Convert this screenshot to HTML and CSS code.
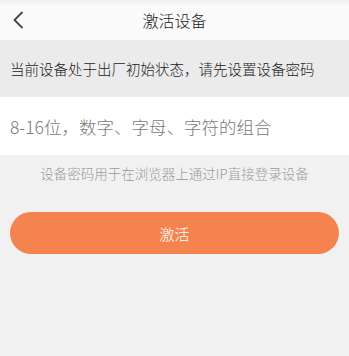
FILE: index.html
```html
<!DOCTYPE html>
<html lang="zh">
<head>
<meta charset="utf-8">
<title>激活设备</title>
<link rel="stylesheet" href="styles.css">
</head>
<body>
<div class="page">
  <header class="topbar">
    <span class="back">
      <svg width="12" height="18" viewBox="0 0 12 18"><path d="M10 1.5 L2.5 9 L10 16.5" fill="none" stroke="#444" stroke-width="1.8" stroke-linecap="round" stroke-linejoin="round"/></svg>
    </span>
    <h1 class="title">激活设备</h1>
  </header>
  <div class="notice">当前设备处于出厂初始状态，请先设置设备密码</div>
  <div class="field"><input class="pwd" type="password" placeholder="8-16位，数字、字母、字符的组合"></div>
  <p class="hint">设备密码用于在浏览器上通过IP直接登录设备</p>
  <button class="btn">激活</button>
</div>
</body>
</html>
```
FILE: styles.css
```css
* { box-sizing: border-box; }
html, body { margin: 0; padding: 0; }
body {
  background: #f1f1f1;
  font-family: "Noto Sans CJK SC", "Roboto", sans-serif;
  font-weight: 300;
  width: 349px;
  height: 356px;
  overflow: hidden;
}
.page { display: flex; flex-direction: column; }
.topbar {
  height: 40px;
  background: linear-gradient(#f0f0f0 0, #fafafa 6px, #fafafa 100%);
  display: flex;
  align-items: center;
  justify-content: center;
  position: relative;
}
.back {
  position: absolute;
  left: 12px;
  top: 11px;
  display: flex;
}
.title {
  margin: 0;
  font-size: 16px;
  font-weight: 300;
  color: #222;
  line-height: 40px;
}
.notice {
  height: 57px;
  background: #ebebeb;
  color: #222;
  font-size: 14.5px;
  display: flex;
  align-items: center;
  padding-left: 10px;
}
.field {
  height: 58px;
  background: #fff;
  display: flex;
  align-items: center;
  padding-left: 10px;
}
.pwd {
  border: none;
  outline: none;
  background: transparent;
  font-family: "Noto Sans CJK SC", "Roboto", sans-serif;
  font-weight: 300;
  font-size: 17.5px;
  width: 100%;
  padding: 0;
  color: #555;
}
.pwd::placeholder { color: #7a7a7a; }
.hint {
  margin: 9px 0 0;
  text-align: center;
  color: #9a9a9a;
  font-size: 13.5px;
  line-height: 18px;
}
.btn {
  margin: 30px 10px 0;
  height: 42px;
  border: none;
  border-radius: 21px;
  background: #f4834f;
  color: #fff;
  font-family: "Noto Sans CJK SC", "Roboto", sans-serif;
  font-weight: 300;
  font-size: 15px;
}
```
